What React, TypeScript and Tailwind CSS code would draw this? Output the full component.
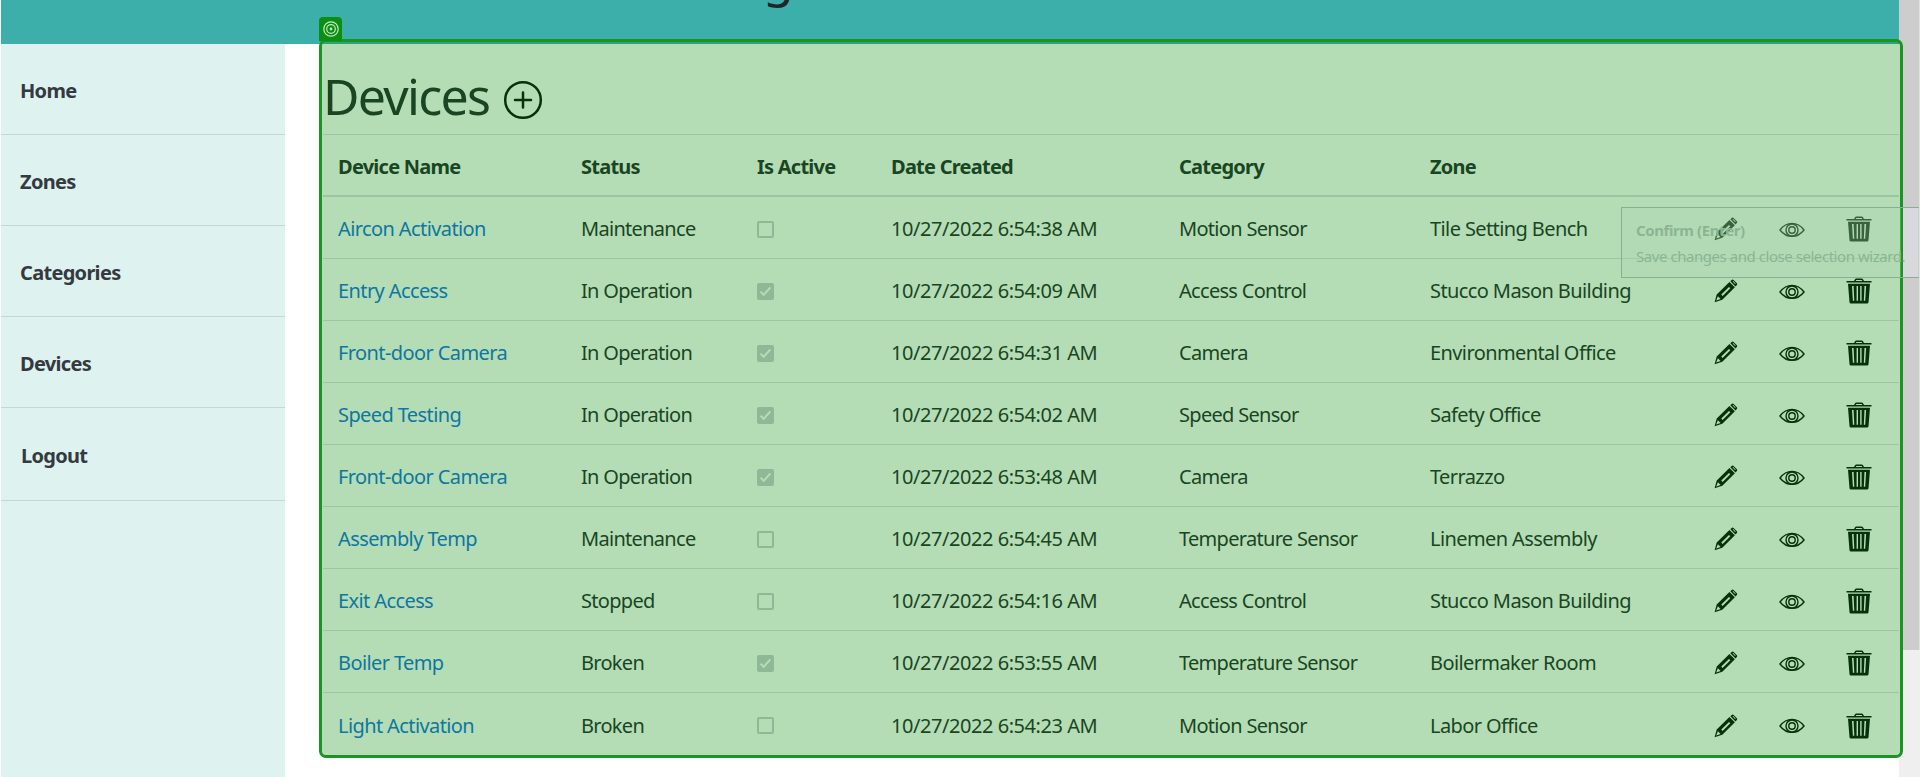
import React from "react";

type Device = { name: string; status: string; active: boolean; date: string; category: string; zone: string };

const devices: Device[] = [
  { name: "Aircon Activation", status: "Maintenance", active: false, date: "10/27/2022 6:54:38 AM", category: "Motion Sensor", zone: "Tile Setting Bench" },
  { name: "Entry Access", status: "In Operation", active: true, date: "10/27/2022 6:54:09 AM", category: "Access Control", zone: "Stucco Mason Building" },
  { name: "Front-door Camera", status: "In Operation", active: true, date: "10/27/2022 6:54:31 AM", category: "Camera", zone: "Environmental Office" },
  { name: "Speed Testing", status: "In Operation", active: true, date: "10/27/2022 6:54:02 AM", category: "Speed Sensor", zone: "Safety Office" },
  { name: "Front-door Camera", status: "In Operation", active: true, date: "10/27/2022 6:53:48 AM", category: "Camera", zone: "Terrazzo" },
  { name: "Assembly Temp", status: "Maintenance", active: false, date: "10/27/2022 6:54:45 AM", category: "Temperature Sensor", zone: "Linemen Assembly" },
  { name: "Exit Access", status: "Stopped", active: false, date: "10/27/2022 6:54:16 AM", category: "Access Control", zone: "Stucco Mason Building" },
  { name: "Boiler Temp", status: "Broken", active: true, date: "10/27/2022 6:53:55 AM", category: "Temperature Sensor", zone: "Boilermaker Room" },
  { name: "Light Activation", status: "Broken", active: false, date: "10/27/2022 6:54:23 AM", category: "Motion Sensor", zone: "Labor Office" },
];

const nav = ["Home", "Zones", "Categories", "Devices", "Logout"];

const columns = "grid grid-cols-[243px_176px_134px_288px_251px_284px_66px_66px_66px] items-center pl-[15px] pt-[3px]";

function Pencil() {
  return (
    <svg width="24" height="24" viewBox="0 0 24 24" fill="#06310b">
      <path fillRule="evenodd" d="M.6 23.2 2.7 15.6 15.4 3.1 20.9 8.2 8.3 20.8ZM2.2 21.5 6.6 20 3.9 17.2ZM8.6 16.9 16.3 9.2 15 7.9 7.3 15.6Z" />
      <path fillRule="evenodd" d="M16.3 2.2 18 .7Q18.8.2 19.6.9L22.9 4.3Q23.6 5.1 22.9 5.9L21.5 7.4ZM18.6 2.5 21.1 5.1 21.7 4.5 19.2 1.9Z" />
    </svg>
  );
}

function Eye() {
  return (
    <svg className="mt-px -ml-px" width="26" height="16" viewBox="0 0 26 16" fill="none" stroke="#06310b" strokeWidth="1.4">
      <path d="M1 8Q6 1.4 13 1.4T25 8Q20 14.4 13 14.4T1 8Z" />
      <circle cx="13" cy="8" r="6" />
      <circle cx="13" cy="8" r="3.2" />
    </svg>
  );
}

function Trash() {
  return (
    <svg width="26" height="26" viewBox="0 0 26 26" fill="#06310b">
      <path d="M.5 3H8L9 1.2Q9.4.5 10.2.5H15.8Q16.6.5 17 1.2L18 3H25.5V4.4H.5ZM9.7 3H16.3L15.7 1.9H10.3Z" fillRule="evenodd" />
      <path fillRule="evenodd" d="M2 5.8H24L22.500 24.2Q22.4 25.5 21 25.5H5Q3.600 25.5 3.5 24.2ZM6 8 6.9 22.8H8.3L7.6 8ZM10.6 8V22.8H12V8ZM14.2 8V22.8H15.6V8ZM18.5 8 17.8 22.8H19.2L20.1 8Z" />
    </svg>
  );
}

function CheckBox({ checked }: { checked: boolean }) {
  return (
    <span className={`flex h-[17px] w-[17px] items-center justify-center rounded-[2px] border-2 border-[#8fb897] ${checked ? "bg-[#8fb897]" : ""}`}>
      {checked && (
        <svg className="shrink-0" width="13" height="13" viewBox="0 0 13 13" fill="none" stroke="#b4ddb6" strokeWidth="2">
          <path d="M1.5 6.600 4.7 9.9 11.3 2.5" />
        </svg>
      )}
    </span>
  );
}

export default function App() {
  return (
    <div className="relative flex h-[777px] w-[1920px] overflow-hidden bg-white font-['Noto_Sans',sans-serif] text-[20px]">
      <div className="flex w-[1899px] flex-col pl-[1px]">
        <header className="relative h-[44px] shrink-0 bg-[#3cafaa]">
          <span className="absolute -top-[57px] left-[762px] text-[50px] leading-[68px] text-[#212529]">g</span>
        </header>
        <div className="flex grow">
          <nav className="w-[284px] shrink-0 bg-[#def2f0]">
            {nav.map((n, i) => (
              <div
                key={n}
                className={`flex items-center border-b border-[#c3d8d6] pt-[4px] font-bold tracking-[-0.7px] text-[#343a40] ${i === 4 ? "h-[93px] pl-[20px]" : "h-[91px] pl-[19px]"}`}
              >
                {n}
              </div>
            ))}
          </nav>
        </div>
      </div>
      <div className="w-[21px] bg-[#efefef]">
        <div className="h-[650px] border-r border-[#e2e2e2] bg-[#cdcdcd]" />
      </div>

      <div className="absolute top-[41px] left-[321px] h-[715px] w-[1580px] bg-[#b4ddb6]">
        <div className="h-[3px] bg-[#2ba37c]" />
        <main className="pr-[2px] pl-[2px] text-[#1a4522]">
          <div className="flex h-[90px] items-center">
            <h1 className="w-[180px] pt-[15px] text-[50px] leading-[75px] tracking-[-1.7px]">Devices</h1>
            <svg className="mt-[21px]" width="40" height="40" viewBox="0 0 40 40" fill="none" stroke="#06310b" strokeWidth="2.5" strokeLinecap="round">
              <circle cx="20" cy="20" r="17.8" />
              <path d="M20 12.5V27.5M12 20H28" />
            </svg>
          </div>
          <div className={`${columns} h-[63px] border-t border-b-2 border-[#9bc6a4] font-bold tracking-[-0.75px]`}>
            <span>Device Name</span>
            <span>Status</span>
            <span>Is Active</span>
            <span>Date Created</span>
            <span>Category</span>
            <span>Zone</span>
          </div>
          {devices.map((d, i) => (
            <div key={i} className={`${columns} h-[62px] whitespace-nowrap ${i < 8 ? "border-b border-[#9bc6a4]" : ""}`}>
              <a className="tracking-[-0.6px] text-[#0f76a0]">{d.name}</a>
              <span className="tracking-[-0.7px]">{d.status}</span>
              <CheckBox checked={d.active} />
              <span className="tracking-[-0.45px]">{d.date}</span>
              <span className="tracking-[-0.7px]">{d.category}</span>
              <span className="tracking-[-0.6px]">{d.zone}</span>
              <Pencil />
              <Eye />
              <Trash />
            </div>
          ))}
        </main>
      </div>

      <div className="absolute top-[207px] left-[1901px] h-[71px] w-[17px] bg-[#d8d9dc]" />
      <div className="pointer-events-none absolute top-[39px] left-[319px] h-[719px] w-[1584px] rounded-[7px] border-[3px] border-[#1a9422]" />
      <div className="absolute top-[17px] left-[319px] flex h-[24px] w-[23px] items-center justify-center rounded-t-[4px] bg-[#0a8f12]">
        <svg width="16" height="16" viewBox="0 0 16 16" fill="none" stroke="#c4ebc4" strokeWidth="1.2">
          <circle cx="8" cy="8" r="7.2" />
          <circle cx="8" cy="8" r="4.3" />
          <circle cx="8" cy="8" r="1.4" fill="#c4ebc4" stroke="none" />
        </svg>
      </div>

      <div className="absolute top-[207px] left-[1621px] h-[71px] w-[298px] overflow-hidden border border-r-0 border-[#8aae91]">
        <div className="h-full w-[279px] bg-[#afd8b4]/30 pt-[9px] pl-[14px] text-[15px] leading-[26px] whitespace-nowrap text-[#8bb592]">
          <div className="font-bold tracking-[-0.4px]">Confirm (Enter)</div>
          <div className="tracking-[-0.45px]">Save changes and close selection wizard.</div>
        </div>
      </div>
    </div>
  );
}
